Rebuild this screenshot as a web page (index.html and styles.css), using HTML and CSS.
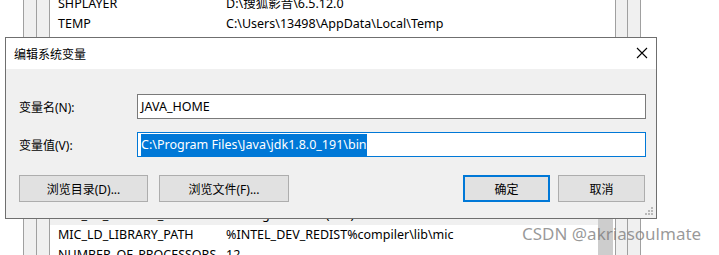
FILE: index.html
```html
<!DOCTYPE html>
<html>
<head>
    <meta charset="utf-8">
    <link rel="stylesheet" href="styles.css">
</head>
<body>
<div class="desk">
    <div class="margin"></div>
    <div class="band"><div class="col"></div><div class="col last"></div></div>
    <div class="list">
        <div class="rows top">
            <div class="row"><span class="name">SHPLAYER</span><span>D:\搜狐影音\6.5.12.0</span></div>
            <div class="row"><span class="name">TEMP</span><span>C:\Users\13498\AppData\Local\Temp</span></div>
        </div>
        <div class="rows bottom">
            <div class="row picked"><span class="name">MIC_LD_LIBRARY_PATH</span><span>C:\Program Files (x86)\Common Files\Intel\Shared Libraries\</span></div>
            <div class="row"><span class="name">MIC_LD_LIBRARY_PATH</span><span>%INTEL_DEV_REDIST%compiler\lib\mic</span></div>
            <div class="row"><span class="name">NUMBER_OF_PROCESSORS</span><span>12</span></div>
        </div>
    </div>
    <div class="scroll"><div class="thumb"></div></div>
    <div class="band right"><div class="col"></div><div class="col last"></div></div>
</div>

<div class="dialog">
    <div class="titlebar">
        <span class="title">编辑系统变量</span>
        <svg class="close" width="12" height="12" viewBox="0 0 12 12">
            <path d="M1 1 L11 11 M11 1 L1 11" stroke="#000" stroke-width="1.1" fill="none"/>
        </svg>
    </div>
    <div class="body">
        <div class="field">
            <label>变量名(N):</label>
            <div class="text">JAVA_HOME</div>
        </div>
        <div class="field">
            <label>变量值(V):</label>
            <div class="text focus"><span class="sel">C:\Program Files\Java\jdk1.8.0_191\bin</span></div>
        </div>
        <div class="buttons">
            <button class="btn wide">浏览目录(D)...</button>
            <button class="btn wide">浏览文件(F)...</button>
            <span class="spacer"></span>
            <button class="btn default">确定</button>
            <button class="btn">取消</button>
        </div>
        <svg class="grip" width="8" height="8" viewBox="0 0 8 8" fill="#b8b8b8">
            <rect x="6" y="0" width="2" height="2"/>
            <rect x="3" y="3" width="2" height="2"/>
            <rect x="6" y="3" width="2" height="2"/>
            <rect x="0" y="6" width="2" height="2"/>
            <rect x="3" y="6" width="2" height="2"/>
            <rect x="6" y="6" width="2" height="2"/>
        </svg>
    </div>
</div>

<div class="mark">CSDN @akriasoulmate</div>
</body>
</html>
```

FILE: styles.css
```css
body {
    margin: 0;
    width: 719px;
    height: 255px;
    overflow: hidden;
    background-color: #fff;
    font-family: "Noto Sans", "Noto Sans CJK SC", sans-serif;
    font-size: 12px;
    color: #000;
    position: relative;
}

.desk {
    display: flex;
    height: 255px;
    overflow: hidden;
}
.margin {
    width: 23px;
}
.band {
    display: flex;
}
.band .col {
    width: 12px;
    background-color: #f0f0f0;
    border-left: 1px solid #a0a0a0;
}
.band .col.last {
    border-right: 1px solid #a0a0a0;
}
.band.right .col:first-child {
    width: 11px;
}

.list {
    width: 548px;
    display: flex;
    flex-direction: column;
    justify-content: space-between;
}
.rows.top {
    margin-top: -6px;
}
.rows.bottom {
    margin-bottom: -10px;
}
.row {
    display: flex;
    height: 20px;
    line-height: 20px;
    padding-left: 8px;
    font-size: 12.5px;
    white-space: nowrap;
    overflow: hidden;
}
.row .name {
    width: 168px;
    flex-shrink: 0;
}
.row.picked {
    background-color: #f0f0f0;
}

.scroll {
    width: 17px;
    display: flex;
    flex-direction: column;
    justify-content: flex-end;
}
.scroll .thumb {
    width: 15px;
    height: 90px;
    background-color: #cdcdcd;
}

.dialog {
    position: absolute;
    left: 5px;
    top: 37px;
    width: 650px;
    height: 180px;
    border: 1px solid #6f6f6f;
    background-color: #f0f0f0;
    display: flex;
    flex-direction: column;
}
.titlebar {
    height: 31px;
    background-color: #fff;
    display: flex;
    align-items: center;
    justify-content: space-between;
    padding: 0 8px 0 8px;
}
.title {
    font-size: 12px;
}
.close {
    margin-top: -2px;
}

.body {
    position: relative;
    flex: 1;
    padding: 25px 10px 0 13px;
}
.field {
    display: flex;
    align-items: center;
    margin-bottom: 13px;
}
.field label {
    width: 118px;
    margin-left: -1px;
    padding-left: 1px;
}
.text {
    flex: 1;
    height: 23px;
    line-height: 23px;
    padding-left: 3px;
    font-size: 12.5px;
    background-color: #fff;
    border: 1px solid #7a7a7a;
    white-space: nowrap;
}
.text.focus {
    border-color: #0078d7;
}
.sel {
    background-color: #0078d7;
    color: #fff;
    padding: 2px 0 3px;
}

.buttons {
    display: flex;
    margin-top: 18px;
    margin-right: 1px;
}
.btn {
    font-family: "Noto Sans", "Noto Sans CJK SC", sans-serif;
    font-size: 12px;
    color: #000;
    width: 87px;
    height: 27px;
    padding: 0;
    background-color: #e1e1e1;
    border: 1px solid #adadad;
    margin-right: 8px;
}
.btn:last-child {
    margin-right: 0;
}
.btn.wide {
    width: 129px;
    margin-right: 11px;
}
.btn.wide + .btn.wide {
    width: 130px;
}
.btn.default {
    border: 2px solid #0078d7;
}
.spacer {
    flex: 1;
}
.grip {
    position: absolute;
    right: 3px;
    bottom: 3px;
}

.mark {
    position: absolute;
    left: 522px;
    top: 222px;
    font-size: 17px;
    color: rgba(120, 120, 120, 0.75);
    font-family: "Noto Sans", sans-serif;
}
```
